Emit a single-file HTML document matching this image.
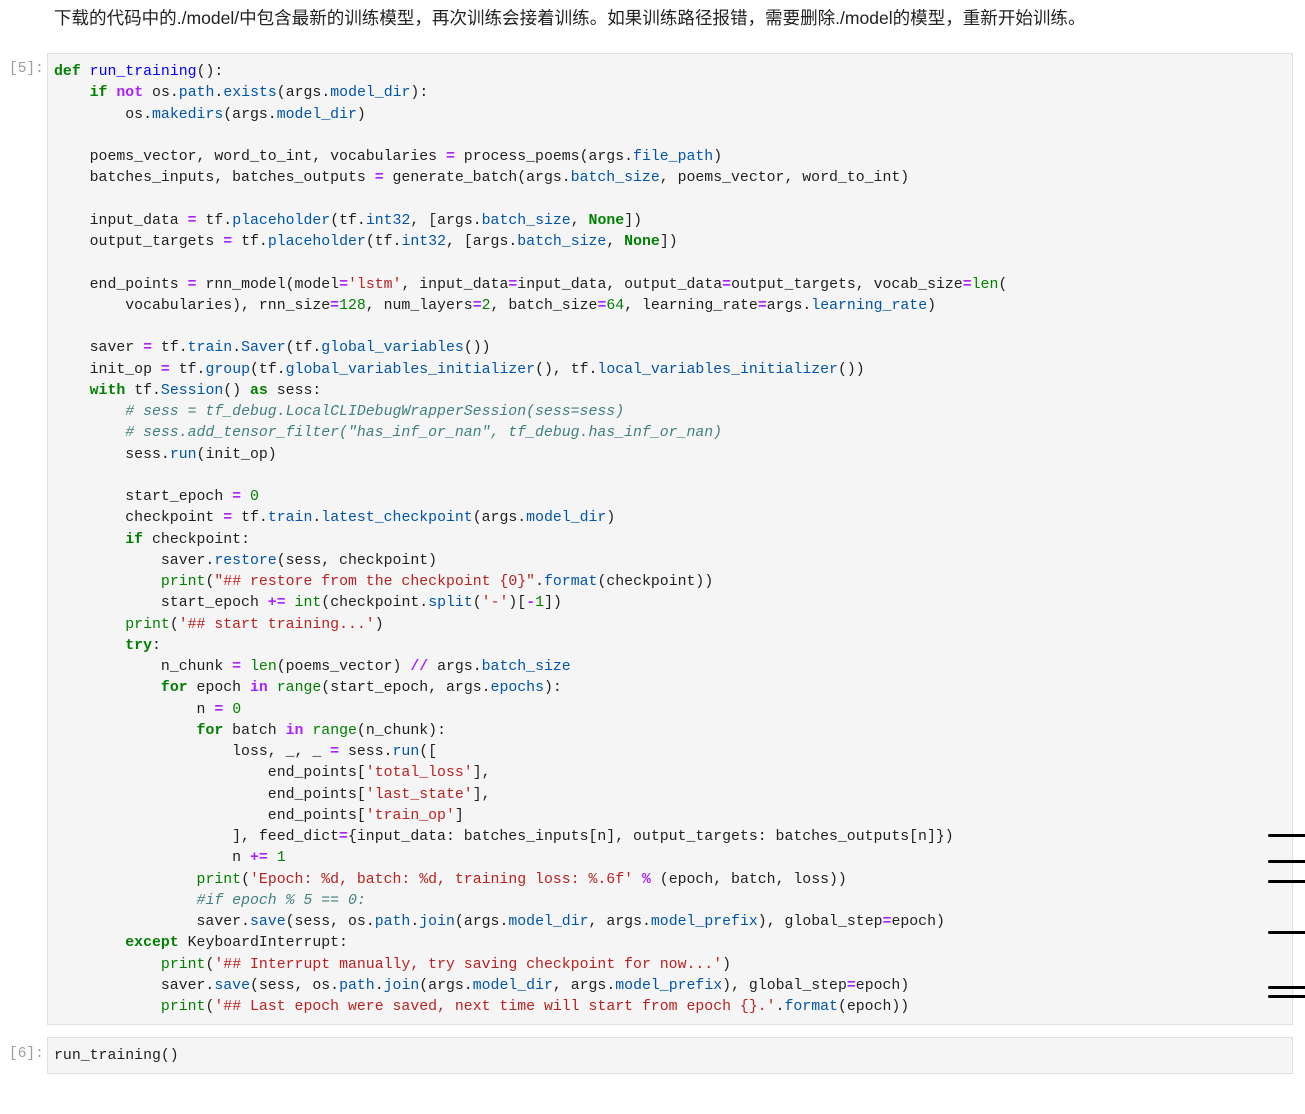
<!DOCTYPE html>
<html><head><meta charset="utf-8"><style>
body{margin:0;background:#fff;width:1305px;height:1114px;overflow:hidden;position:relative;font-family:"Liberation Sans","Noto Sans CJK SC",sans-serif}
.md{position:absolute;left:54px;top:6px;font-size:17.55px;color:#222;line-height:24px;white-space:nowrap}
.pr{position:absolute;left:9px;font-family:"Liberation Mono",monospace;font-size:14.5px;color:#9e9e9e}
.cell{position:absolute;left:47px;width:1244px;background:#f5f5f5;border:1px solid #e0e0e0}
pre{margin:0;padding:0 0 0 6px;font-family:"Liberation Mono",monospace;font-size:14.85px;line-height:21.25px;color:#212121}
.k{color:#008000;font-weight:bold}.b{color:#008000}.s{color:#ba2121}.o{color:#aa22ff;font-weight:bold}.n{color:#008000}.p{color:#0055aa}.c{color:#408080;font-style:italic}.f{color:#0000ff}
.ln{position:absolute;left:1268px;width:37px;height:2.5px;background:#000;border-radius:2px 0 0 2px}
</style></head><body>
<div class="md">下载的代码中的./model/中包含最新的训练模型，再次训练会接着训练。如果训练路径报错，需要删除./model的模型，重新开始训练。</div>
<div class="pr" style="top:61px">[5]:</div>
<div class="cell" style="top:53px;height:970px"><pre style="padding-top:8px"><span class="k">def</span> <span class="f">run_training</span>():
    <span class="k">if</span> <span class="o">not</span> os<span>.</span><span class="p">path</span>.<span class="p">exists</span>(args.<span class="p">model_dir</span>):
        os.<span class="p">makedirs</span>(args.<span class="p">model_dir</span>)

    poems_vector, word_to_int, vocabularies <span class="o">=</span> process_poems(args.<span class="p">file_path</span>)
    batches_inputs, batches_outputs <span class="o">=</span> generate_batch(args.<span class="p">batch_size</span>, poems_vector, word_to_int)

    input_data <span class="o">=</span> tf.<span class="p">placeholder</span>(tf.<span class="p">int32</span>, [args.<span class="p">batch_size</span>, <span class="k">None</span>])
    output_targets <span class="o">=</span> tf.<span class="p">placeholder</span>(tf.<span class="p">int32</span>, [args.<span class="p">batch_size</span>, <span class="k">None</span>])

    end_points <span class="o">=</span> rnn_model(model<span class="o">=</span><span class="s">'lstm'</span>, input_data<span class="o">=</span>input_data, output_data<span class="o">=</span>output_targets, vocab_size<span class="o">=</span><span class="b">len</span>(
        vocabularies), rnn_size<span class="o">=</span><span class="n">128</span>, num_layers<span class="o">=</span><span class="n">2</span>, batch_size<span class="o">=</span><span class="n">64</span>, learning_rate<span class="o">=</span>args.<span class="p">learning_rate</span>)

    saver <span class="o">=</span> tf.<span class="p">train</span>.<span class="p">Saver</span>(tf.<span class="p">global_variables</span>())
    init_op <span class="o">=</span> tf.<span class="p">group</span>(tf.<span class="p">global_variables_initializer</span>(), tf.<span class="p">local_variables_initializer</span>())
    <span class="k">with</span> tf.<span class="p">Session</span>() <span class="k">as</span> sess:
        <span class="c"># sess = tf_debug.LocalCLIDebugWrapperSession(sess=sess)</span>
        <span class="c"># sess.add_tensor_filter("has_inf_or_nan", tf_debug.has_inf_or_nan)</span>
        sess.<span class="p">run</span>(init_op)

        start_epoch <span class="o">=</span> <span class="n">0</span>
        checkpoint <span class="o">=</span> tf.<span class="p">train</span>.<span class="p">latest_checkpoint</span>(args.<span class="p">model_dir</span>)
        <span class="k">if</span> checkpoint:
            saver.<span class="p">restore</span>(sess, checkpoint)
            <span class="b">print</span>(<span class="s">"## restore from the checkpoint {0}"</span>.<span class="p">format</span>(checkpoint))
            start_epoch <span class="o">+=</span> <span class="b">int</span>(checkpoint.<span class="p">split</span>(<span class="s">'-'</span>)[<span class="o">-</span><span class="n">1</span>])
        <span class="b">print</span>(<span class="s">'## start training...'</span>)
        <span class="k">try</span>:
            n_chunk <span class="o">=</span> <span class="b">len</span>(poems_vector) <span class="o">//</span> args.<span class="p">batch_size</span>
            <span class="k">for</span> epoch <span class="o">in</span> <span class="b">range</span>(start_epoch, args.<span class="p">epochs</span>):
                n <span class="o">=</span> <span class="n">0</span>
                <span class="k">for</span> batch <span class="o">in</span> <span class="b">range</span>(n_chunk):
                    loss, _, _ <span class="o">=</span> sess.<span class="p">run</span>([
                        end_points[<span class="s">'total_loss'</span>],
                        end_points[<span class="s">'last_state'</span>],
                        end_points[<span class="s">'train_op'</span>]
                    ], feed_dict<span class="o">=</span>{input_data: batches_inputs[n], output_targets: batches_outputs[n]})
                    n <span class="o">+=</span> <span class="n">1</span>
                <span class="b">print</span>(<span class="s">'Epoch: %d, batch: %d, training loss: %.6f'</span> <span class="o">%</span> (epoch, batch, loss))
                <span class="c">#if epoch % 5 == 0:</span>
                saver.<span class="p">save</span>(sess, os.<span class="p">path</span>.<span class="p">join</span>(args.<span class="p">model_dir</span>, args.<span class="p">model_prefix</span>), global_step<span class="o">=</span>epoch)
        <span class="k">except</span> KeyboardInterrupt:
            <span class="b">print</span>(<span class="s">'## Interrupt manually, try saving checkpoint for now...'</span>)
            saver.<span class="p">save</span>(sess, os.<span class="p">path</span>.<span class="p">join</span>(args.<span class="p">model_dir</span>, args.<span class="p">model_prefix</span>), global_step<span class="o">=</span>epoch)
            <span class="b">print</span>(<span class="s">'## Last epoch were saved, next time will start from epoch {}.'</span>.<span class="p">format</span>(epoch))</pre></div>
<div class="pr" style="top:1046px">[6]:</div>
<div class="cell" style="top:1037px;height:35px"><pre style="padding-top:8px">run_training()</pre></div>
<div class="ln" style="top:834px"></div>
<div class="ln" style="top:860px"></div>
<div class="ln" style="top:880px"></div>
<div class="ln" style="top:931px"></div>
<div class="ln" style="top:986px"></div>
<div class="ln" style="top:995px"></div>
</body></html>
